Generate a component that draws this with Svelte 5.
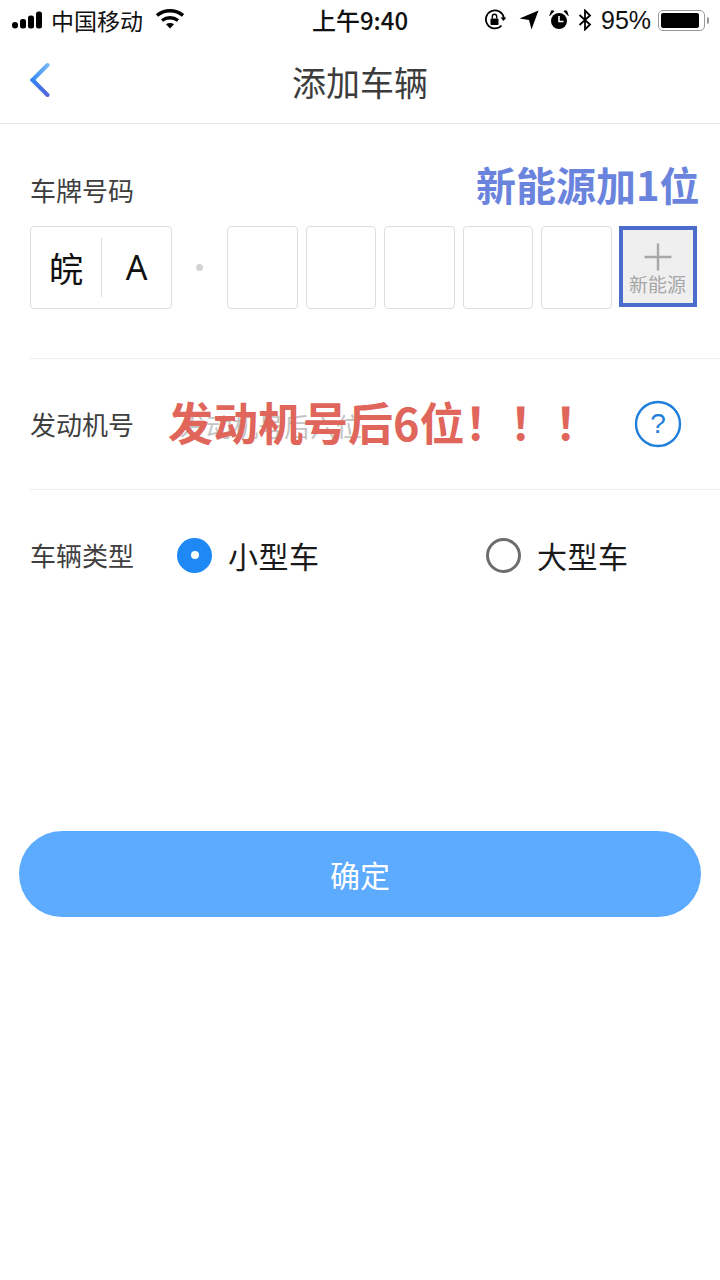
<script>
	const cells = [0, 1, 2, 3, 4];
</script>

<div class="page">
	<div class="status">
		<div class="status-left">
			<svg class="signal" width="34" height="18" viewBox="0 0 34 18">
				<rect x="0" y="11" width="6" height="6.5" rx="3" fill="#000" />
				<rect x="8" y="8" width="6" height="9.5" rx="2.5" fill="#000" />
				<rect x="16" y="4.5" width="6" height="13" rx="2.5" fill="#000" />
				<rect x="24" y="0.5" width="6" height="17" rx="2.5" fill="#000" />
			</svg>
			<span class="carrier">中国移动</span>
			<svg class="wifi" width="28" height="20" viewBox="0 0 28 20">
				<path d="M1 6.5C8.500 0.200 19.500 0.200 27 6.500" fill="none" stroke="#000" stroke-width="3.400" />
				<path d="M6 11.500C10.800 7.800 17.200 7.800 22 11.500" fill="none" stroke="#000" stroke-width="3.400" />
				<path d="M10 15.200C12.500 13.600 15.500 13.600 18 15.200L14 19.500Z" fill="#000" />
			</svg>
		</div>
		<span class="clock">上午9:40</span>
		<div class="status-right">
			<svg width="22" height="22" viewBox="0 0 22 22">
				<path d="M17.500 16.500A9 9 0 1 1 19.800 9" fill="none" stroke="#000" stroke-width="1.800" />
				<path d="M16.500 8.500h6l-3 3.500z" fill="#000" />
				<rect x="6.500" y="9.500" width="8" height="6.500" rx="1" fill="#000" />
				<path d="M8.300 9.500V7.500a2.200 2.200 0 0 1 4.400 0V9.500" fill="none" stroke="#000" stroke-width="1.400" />
			</svg>
			<svg class="ml-arrow" width="20" height="20" viewBox="0 0 20 20">
				<path d="M19.500 0.500L12.500 19.500L10 10L0.500 8.500Z" fill="#000" />
			</svg>
			<svg class="ml-alarm" width="20" height="20" viewBox="0 0 20 20">
				<circle cx="10" cy="11" r="8" fill="#000" />
				<path d="M10 6V11.500H14.500" fill="none" stroke="#fff" stroke-width="1.600" />
				<path d="M0.800 5.500L5 1.200L2.500 0.800ZM19.200 5.500L15 1.200L17.500 0.800Z" fill="#000" stroke="#000" stroke-width="1" />
			</svg>
			<svg class="ml-bt" width="14" height="22" viewBox="0 0 14 22">
				<path d="M1.500 6L12 15.500L7 20.500V1.500L12 6.500L1.500 16" fill="none" stroke="#000" stroke-width="1.800" />
			</svg>
			<span class="pct">95%</span>
			<div class="battery"><div class="battery-fill"></div></div>
			<div class="battery-tip"></div>
		</div>
	</div>

	<header class="nav">
		<svg class="back" width="40" height="36" viewBox="0 0 40 36">
			<defs>
				<linearGradient id="backGrad" x1="0" y1="0" x2="1" y2="0">
					<stop offset="0" stop-color="#2a8cf5" />
					<stop offset="1" stop-color="#8a3fc4" />
				</linearGradient>
				<linearGradient id="upGrad" x1="0" y1="1" x2="1" y2="0">
					<stop offset="0" stop-color="#3b8ef5" />
					<stop offset="1" stop-color="#73b4f5" />
				</linearGradient>
				<linearGradient id="downGrad" x1="0" y1="0" x2="1" y2="1">
					<stop offset="0" stop-color="#2f86f2" />
					<stop offset="1" stop-color="#5566d8" />
				</linearGradient>
			</defs>
			<path d="M2.500 18H37.500" stroke="url(#backGrad)" stroke-width="4" stroke-linecap="round" fill="none" />
			<path d="M2.500 18L17.500 3" stroke="url(#upGrad)" stroke-width="4" stroke-linecap="round" fill="none" />
			<path d="M2.500 18L17.500 33" stroke="url(#downGrad)" stroke-width="4" stroke-linecap="round" fill="none" />
		</svg>
		<h1>添加车辆</h1>
	</header>

	<section class="plate-section">
		<div class="label">车牌号码</div>
		<div class="note-blue">新能源加1位</div>
		<div class="plate-row">
			<div class="prefix">
				<span class="prov">皖</span>
				<span class="letter">A</span>
			</div>
			<span class="dot"></span>
			<div class="cells">
				{#each cells as c (c)}
					<div class="cell"></div>
				{/each}
				<div class="cell-new">
					<svg width="30" height="30" viewBox="0 0 30 30">
						<path d="M15 1.500V28.500M1.500 15H28.500" stroke="#a8a8a8" stroke-width="2.400" />
					</svg>
					<span>新能源</span>
				</div>
			</div>
		</div>
	</section>

	<section class="engine">
		<div class="label">发动机号</div>
		<div class="placeholder">发动机号后六位</div>
		<svg class="help" width="48" height="48" viewBox="0 0 48 48">
			<circle cx="24" cy="24" r="22" fill="none" stroke="#1f7fdb" stroke-width="2.400" />
			<text x="24" y="33" text-anchor="middle" class="help-mark">?</text>
		</svg>
		<div class="note-red">发动机号后6位！！！</div>
	</section>

	<section class="type">
		<div class="label">车辆类型</div>
		<div class="option small">
			<span class="radio on"></span>
			<span class="opt-text">小型车</span>
		</div>
		<div class="option">
			<span class="radio"></span>
			<span class="opt-text">大型车</span>
		</div>
	</section>

	<div class="action">
		<button type="button">确定</button>
	</div>
</div>

<style>
	:global(body) {
		margin: 0;
		background: #fff;
	}

	.page {
		width: 720px;
		height: 1280px;
		overflow: hidden;
		background: #fff;
		font-family: "Noto Sans CJK SC", "Noto Sans", sans-serif;
		color: #333;
	}

	.status {
		height: 40px;
		display: flex;
		align-items: center;
		justify-content: space-between;
		position: relative;
		color: #000;
	}

	.status-left {
		display: flex;
		align-items: center;
		padding-left: 12px;
	}

	.signal {
		margin-right: 5px;
	}

	.carrier {
		font-size: 23px;
		line-height: 40px;
		color: #111;
	}

	.wifi {
		margin-left: 13px;
		margin-top: -2px;
	}

	.clock {
		position: absolute;
		left: 0;
		right: 0;
		text-align: center;
		font-size: 24px;
		line-height: 40px;
		font-family: "Noto Sans CJK SC", sans-serif;
		font-weight: 500;
		color: #111;
	}

	.status-right {
		display: flex;
		align-items: center;
		padding-left: 484px;
		position: absolute;
		left: 0;
		top: 0;
		height: 40px;
	}

	.ml-arrow {
		margin-left: 13px;
	}

	.ml-alarm {
		margin-left: 10px;
	}

	.ml-bt {
		margin-left: 9px;
	}

	.pct {
		margin-left: 9px;
		font-family: "Liberation Sans", sans-serif;
		font-size: 25px;
		color: #111;
	}

	.battery {
		width: 46px;
		height: 20px;
		margin-left: 7px;
		padding: 2px;
		border: 1.500px solid #999;
		border-radius: 5px;
		box-sizing: content-box;
		height: 15px;
		width: 41px;
	}

	.battery-fill {
		width: 38px;
		height: 15px;
		background: #000;
		border-radius: 2px;
	}

	.battery-tip {
		width: 2px;
		height: 7px;
		margin-left: 2px;
		background: #999;
		border-radius: 0 2px 2px 0;
	}

	.nav {
		height: 83px;
		border-bottom: 1px solid #e8e8e8;
		display: flex;
		align-items: center;
		justify-content: center;
		position: relative;
	}

	.back {
		position: absolute;
		left: 30px;
		top: 22px;
	}

	h1 {
		margin: 0;
		font-size: 34px;
		font-weight: 400;
		color: #3c3c3c;
		line-height: 80px;
	}

	.label {
		font-size: 26px;
		color: #3f3f3f;
		line-height: 36px;
		white-space: nowrap;
	}

	.plate-section {
		height: 235px;
		margin-left: 30px;
		border-bottom: 1px solid #eee;
		padding-top: 48px;
		box-sizing: border-box;
		position: relative;
	}

	.plate-section .label {
		height: 54px;
	}

	.note-blue {
		position: absolute;
		left: 446px;
		top: 32px;
		font-size: 40px;
		line-height: 56px;
		font-weight: 700;
		color: #6a84de;
		white-space: nowrap;
	}

	.plate-row {
		display: flex;
		align-items: flex-start;
	}

	.prefix {
		width: 142px;
		height: 83px;
		box-sizing: border-box;
		border: 1px solid #ddd;
		border-radius: 4px;
		display: flex;
		align-items: center;
	}

	.prov {
		width: 70px;
		height: 59px;
		line-height: 59px;
		text-align: center;
		font-size: 34px;
		color: #111;
		border-right: 1px solid #ddd;
	}

	.letter {
		flex: 1;
		text-align: center;
		font-family: "Noto Sans", sans-serif;
		font-size: 34px;
		line-height: 59px;
		color: #111;
	}

	.dot {
		width: 7px;
		height: 7px;
		border-radius: 50%;
		background: #d4d4d4;
		margin: 38px 24px 0 24px;
	}

	.cells {
		display: flex;
		gap: 8px;
	}

	.cell {
		width: 70.500px;
		height: 83px;
		box-sizing: border-box;
		border: 1px solid #ddd;
		border-radius: 4px;
	}

	.cell-new {
		width: 78px;
		height: 81px;
		margin-left: -1px;
		box-sizing: border-box;
		border: 4px solid #4a6ccb;
		background: #efefef;
		display: flex;
		flex-direction: column;
		align-items: center;
		padding-top: 12px;
		color: #a6a6a6;
		font-size: 19px;
		line-height: 24px;
	}

	.cell-new span {
		white-space: nowrap;
	}

	.engine {
		height: 131px;
		margin-left: 30px;
		border-bottom: 1px solid #eee;
		box-sizing: border-box;
		display: flex;
		align-items: center;
		position: relative;
	}

	.placeholder {
		margin-left: 46px;
		margin-top: 2px;
		font-size: 26px;
		letter-spacing: 0;
		color: #c4c4c4;
		white-space: nowrap;
	}

	.help {
		margin-left: auto;
		margin-right: 38px;
	}

	.help-mark {
		font-family: "Liberation Sans", sans-serif;
		font-size: 28px;
		fill: #1f7fdb;
	}

	.note-red {
		position: absolute;
		left: 138px;
		top: 30px;
		font-size: 45px;
		line-height: 66px;
		font-weight: 700;
		color: #e0655a;
		white-space: nowrap;
	}

	.type {
		height: 130px;
		margin-left: 30px;
		display: flex;
		align-items: center;
	}

	.option {
		display: flex;
		align-items: center;
		gap: 16px;
		margin-left: 43px;
	}

	.option.small {
		width: 266px;
	}

	.radio {
		width: 35px;
		height: 35px;
		box-sizing: border-box;
		border-radius: 50%;
		border: 3px solid #6d6d6d;
		display: flex;
		align-items: center;
		justify-content: center;
	}

	.radio.on {
		border: none;
		background: #1e88f5;
	}

	.radio.on::after {
		content: "";
		width: 8px;
		height: 8px;
		border-radius: 50%;
		background: #fff;
	}

	.opt-text {
		font-size: 30px;
		color: #1a1a1a;
		letter-spacing: 0.500px;
	}

	.action {
		padding: 211px 19px 0;
	}

	button {
		display: block;
		width: 682px;
		height: 86px;
		border: none;
		border-radius: 43px;
		background: #5cabff;
		color: #fff;
		font-family: inherit;
		font-size: 30px;
	}
</style>
